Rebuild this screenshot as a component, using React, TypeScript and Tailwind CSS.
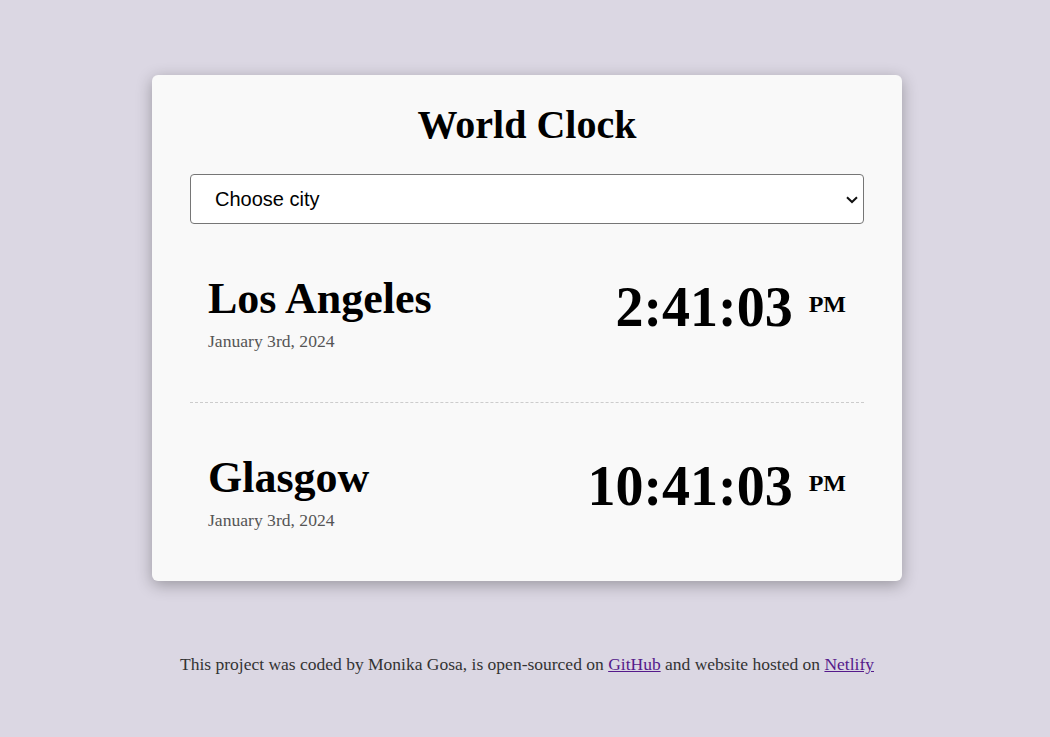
import React from "react";

const serif = { fontFamily: '"Liberation Serif", "Times New Roman", serif' };

function CityRow({
  name,
  date,
  time,
  border,
}: {
  name: string;
  date: string;
  time: string;
  border?: boolean;
}) {
  return (
    <div
      className={
        border
          ? "flex items-start justify-between pt-[50px] pb-[51px] pl-[18px] pr-[18px] border-b border-dashed border-[#cccccc]"
          : "flex items-start justify-between pt-[50px] pb-[51px] pl-[18px] pr-[18px]"
      }
    >
      <div className="flex flex-col">
        <h2 className="text-[44px] font-bold leading-[50px] text-black m-0">{name}</h2>
        <div className="mt-[7px] text-[17.6px] leading-[20px] text-[#555555]">{date}</div>
      </div>
      <div className="flex items-start mt-[1px]">
        <span className="text-[56px] font-bold leading-[64px] text-black">{time}</span>
        <span className="ml-[16px] mt-[17px] text-[24px] font-bold leading-[24px] text-black">PM</span>
      </div>
    </div>
  );
}

export default function App() {
  return (
    <div className="min-h-[737px] w-full bg-[#dbd7e3] pl-[4px]" style={serif}>
      <div className="pt-[75px]">
        <div className="mx-auto w-[750px] rounded-[6px] bg-[#f9f9f9] px-[38px] pt-[27px] shadow-[0_4px_16px_rgba(0,0,0,0.3)]">
          <h1 className="text-center text-[40px] font-bold leading-[46px] text-black">World Clock</h1>
          <div className="relative mt-[26px]">
            <select
              className="h-[50px] w-full appearance-none rounded-[4px] border border-[#767676] bg-white pl-[24px] text-[20px] text-black outline-none"
              style={{ fontFamily: '"Liberation Sans", Arial, sans-serif' }}
              defaultValue=""
            >
              <option value="">Choose city</option>
              <option value="tokyo">Tokyo</option>
              <option value="paris">Paris</option>
              <option value="sydney">Sydney</option>
            </select>
            <svg
              className="pointer-events-none absolute right-[6px] top-[22px]"
              width="12"
              height="8"
              viewBox="0 0 12 8"
              fill="none"
            >
              <path d="M1 1.2 L6 6 L11 1.2" stroke="#111111" strokeWidth="2" />
            </svg>
          </div>
          <CityRow name="Los Angeles" date="January 3rd, 2024" time="2:41:03" border />
          <CityRow name="Glasgow" date="January 3rd, 2024" time="10:41:03" />
        </div>
        <p className="mt-[73px] text-center text-[17.5px] leading-[20px] text-[#333333]">
          This project was coded by Monika Gosa, is open-sourced on{" "}
          <a href="#" className="text-[#551a8b] underline">
            GitHub
          </a>{" "}
          and website hosted on{" "}
          <a href="#" className="text-[#551a8b] underline">
            Netlify
          </a>
        </p>
      </div>
    </div>
  );
}
